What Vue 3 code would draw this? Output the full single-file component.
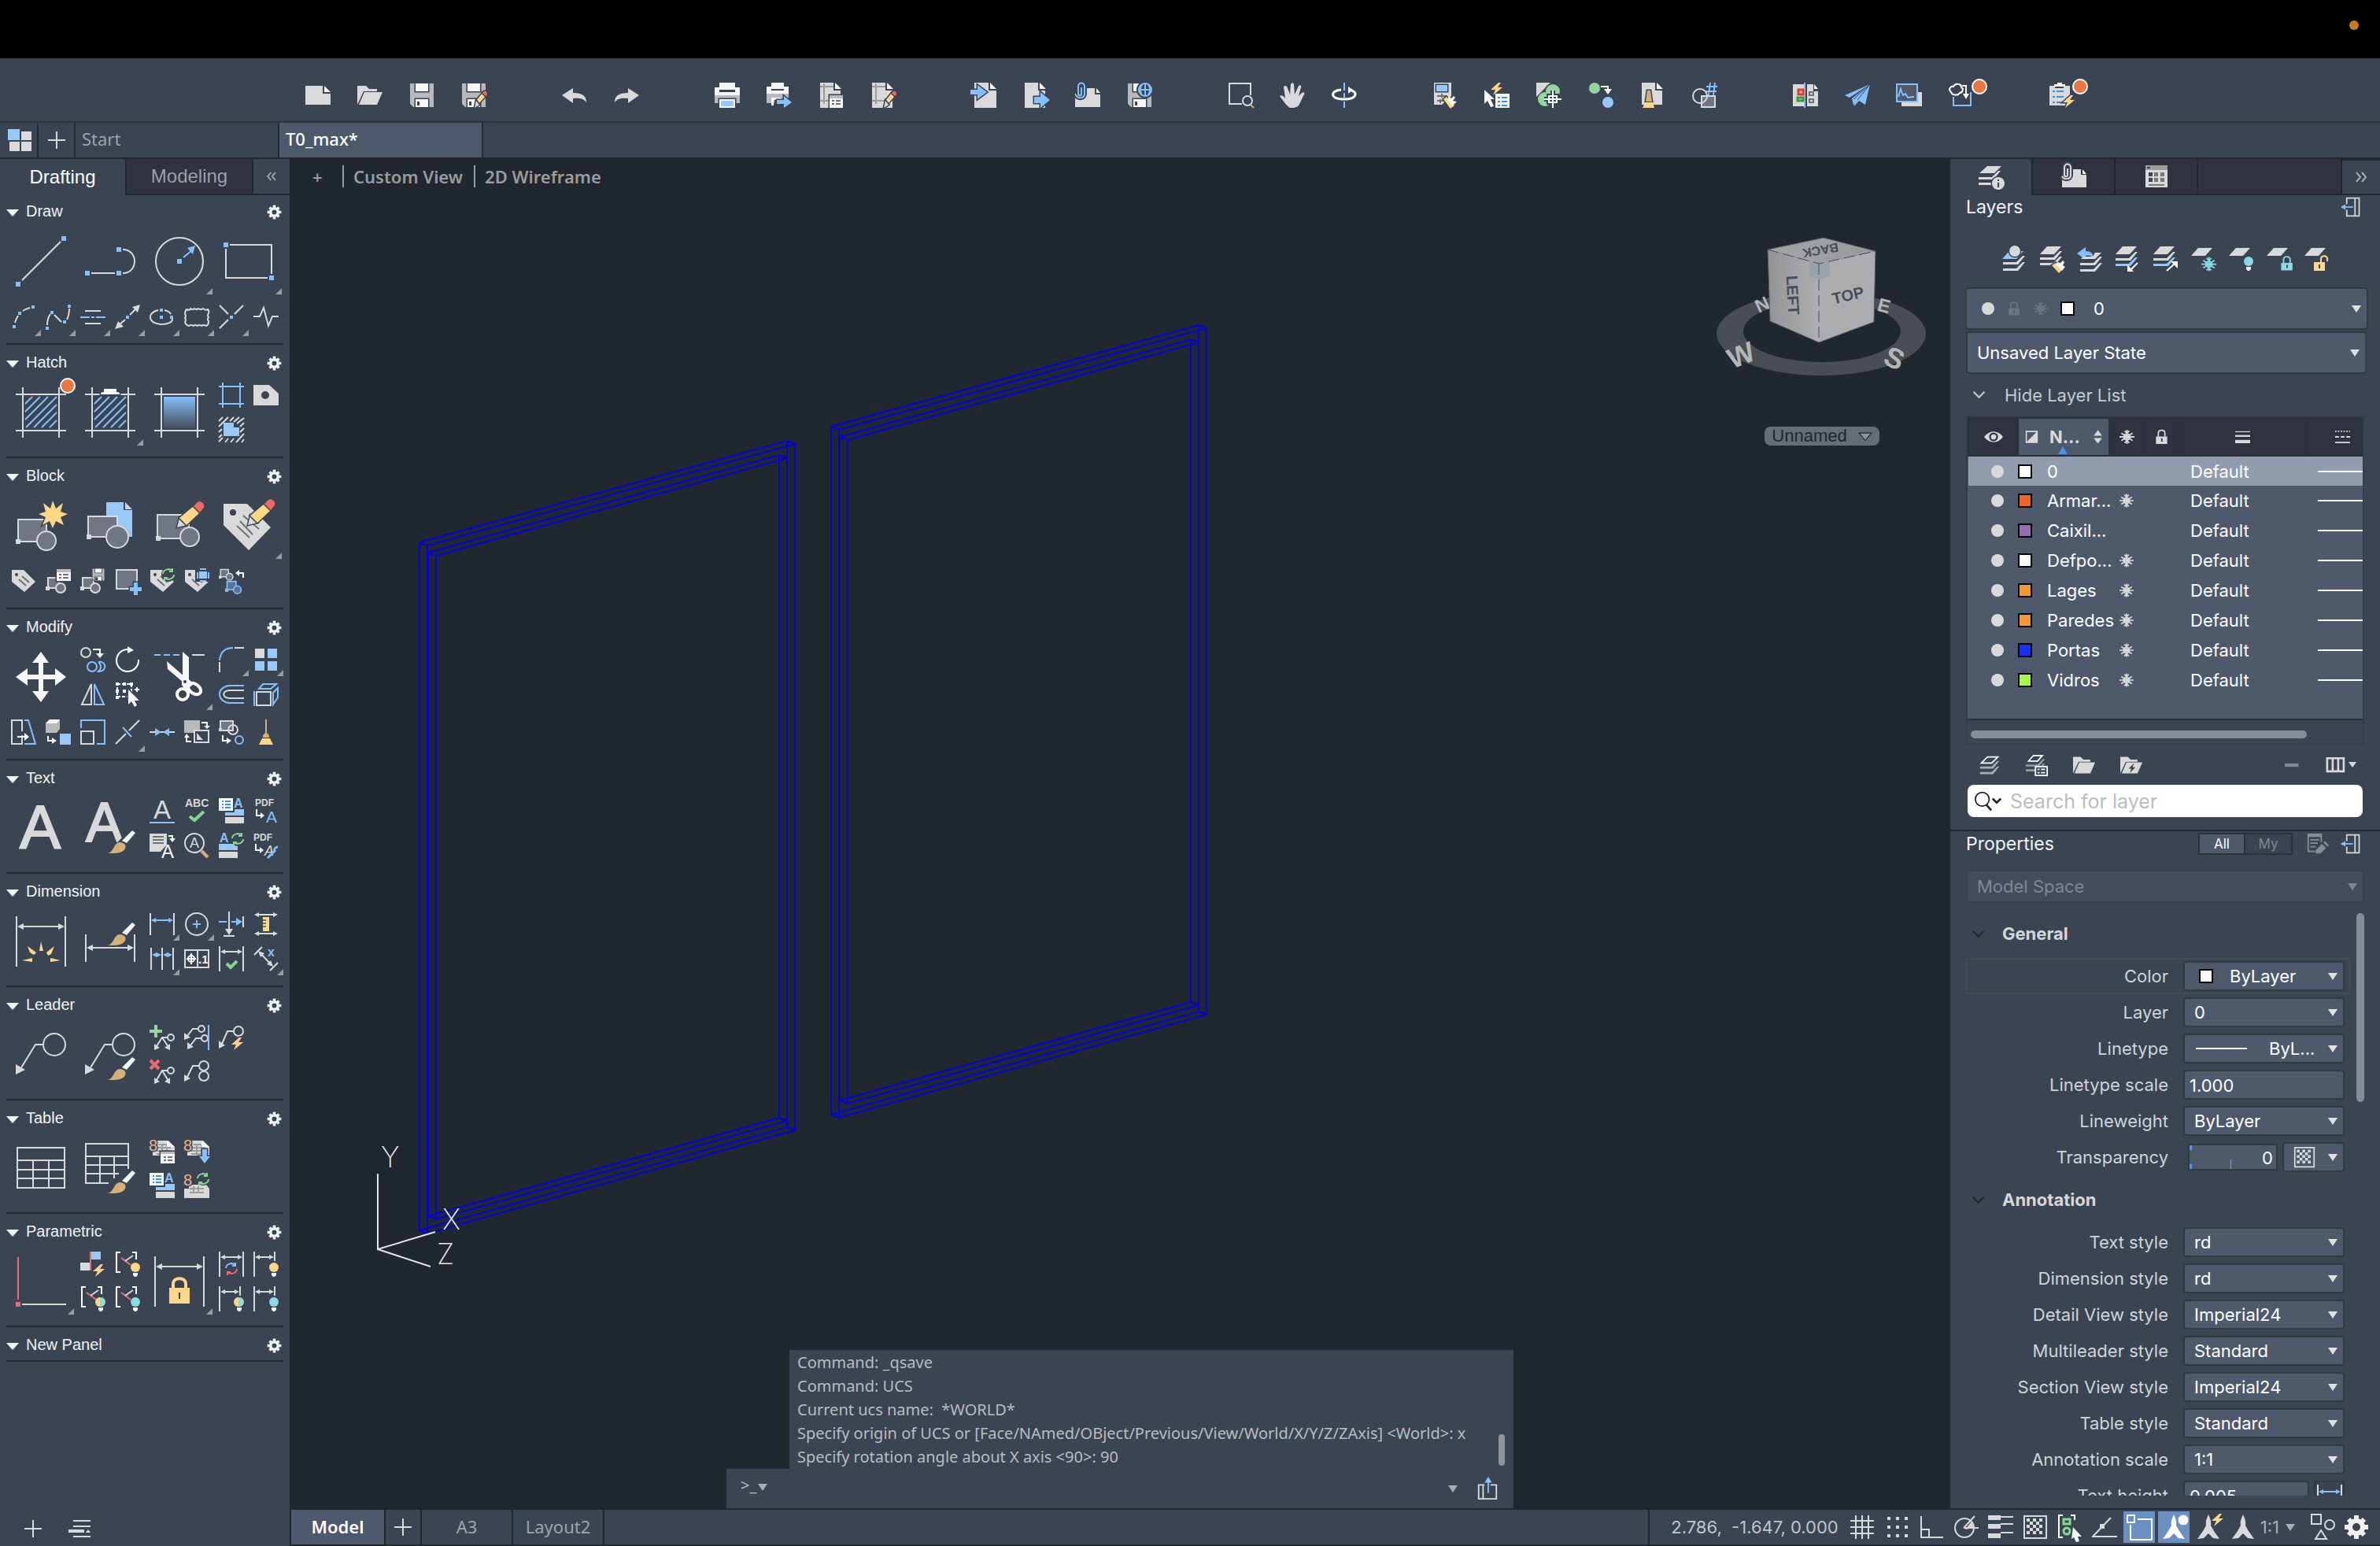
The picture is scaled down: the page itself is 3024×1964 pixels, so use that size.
<template>
  <div class="app">
    <header class="menubar">
      <span class="rec-dot"></span>
    </header>

    <nav class="toolbar" aria-label="Quick access">
      <div v-for="(group, i) in toolbar" :key="i" class="tool-group">
        <button v-for="name in group" :key="name" class="tool" :aria-label="name">
          <Icon :name="name" />
          <span v-if="badged.includes(name)" class="badge"></span>
        </button>
      </div>
    </nav>

    <nav class="doc-tabs" aria-label="Documents">
      <button class="doc-tab home" aria-label="Home"><Icon name="home" /></button>
      <button class="doc-tab add" aria-label="New tab"><Icon name="plus" /></button>
      <button class="doc-tab file">Start</button>
      <button class="doc-tab file active">T0_max*</button>
    </nav>

    <div class="main">
      <!-- tool palette -->
      <aside class="palette">
        <div class="palette-tabs">
          <button class="palette-tab active">Drafting</button>
          <button class="palette-tab">Modeling</button>
          <button class="collapse" aria-label="Collapse"><Icon name="left2" /></button>
        </div>
        <section v-for="panel in panels" :key="panel.title" class="panel">
          <div class="panel-head">
            <i class="tri"></i>
            <h2>{{ panel.title }}</h2>
            <button class="panel-gear" :aria-label="panel.title + ' settings'"><Icon name="gear" /></button>
          </div>
          <div v-if="panel.tools" class="panel-grid" :class="{ tall: panel.tall }">
            <button
              v-for="tool in panel.tools"
              :key="tool.icon"
              class="cell"
              :class="{ big: tool.big, fly: tool.fly, fifth: tool.fifth }"
              :aria-label="tool.icon"
            >
              <Icon :name="tool.icon" :size="tool.big ? 64 : 32" />
              <span v-if="tool.icon === 'hatch'" class="badge"></span>
            </button>
          </div>
        </section>
        <div class="palette-foot">
          <button aria-label="Add panel"><Icon name="plus" /></button>
          <button aria-label="Panel list"><Icon name="list" /></button>
        </div>
      </aside>

      <div class="work">
        <div class="stage">
          <main class="canvas">
            <svg class="drawing" aria-hidden="true">
              <g transform="translate(-368 -202)">
                <g v-for="shift in frames" :key="shift" :transform="shift" class="frame">
                  <path d="M533 689 1000 560V1432L533 1563z" />
                  <path d="M543 693 1010 564V1436L543 1567z" />
                  <path d="M544 702 990 578V1420L544 1545z" />
                  <path d="M554 706 1000 582V1424L554 1549z" />
                  <path d="M533 689l10 4M1000 560l10 4M1000 1432l10 4M533 1563l10 4M544 702l10 4M990 578l10 4M990 1420l10 4M544 1545l10 4" />
                </g>
                <path class="axis" d="M480 1491V1587L553 1565M480 1587 547 1609" />
                <text class="axis-name" x="484" y="1483">Y</text>
                <text class="axis-name" x="562" y="1562">X</text>
                <text class="axis-name" x="555" y="1606">Z</text>
              </g>
            </svg>

            <div class="view-labels">
              <button class="view-add">+</button>
              <button>Custom View</button>
              <button>2D Wireframe</button>
            </div>

            <div class="navigator">
              <svg width="290" height="200" viewBox="2170 290 290 200" role="img" aria-label="View cube">
                <defs>
                  <linearGradient id="cubeTop" x1="0" x2="1">
                    <stop offset="0" stop-color="#a3a4a6" /><stop offset="1" stop-color="#98999b" />
                  </linearGradient>
                  <linearGradient id="cubeLeft" x1="0" x2="1">
                    <stop offset="0" stop-color="#939496" /><stop offset="1" stop-color="#adaeb0" />
                  </linearGradient>
                </defs>
                <path
                  class="ring"
                  fill-rule="evenodd"
                  d="M2181 424a133 53 0 1 0 266 0a133 53 0 1 0-266 0zM2215 421a100 39 0 1 0 200 0a100 39 0 1 0-200 0z"
                />
                <g class="compass">
                  <text transform="translate(2239 387) rotate(155)">N</text>
                  <text transform="translate(2394 388) rotate(15)">E</text>
                  <text class="near" transform="translate(2212 451) rotate(-22)">W</text>
                  <text class="near" transform="translate(2407 455) rotate(24)">S</text>
                </g>
                <path fill="url(#cubeTop)" d="M2317 302 2383 319 2311 335 2246 317z" />
                <path fill="url(#cubeLeft)" d="M2246 317 2311 335V435L2249 408z" />
                <path fill="#acadaf" d="M2311 335 2383 319 2381 409 2311 435z" />
                <path fill="#9ca2aa" d="M2298 332l13-3 14 3v19l-14 4-13-4z" />
                <path class="edges" d="M2246 317 2311 335 2383 319M2311 335V435" />
                <path class="outline" d="M2317 302 2383 319 2381 409 2311 435 2249 408 2246 317z" />
                <g class="faces">
                  <text transform="translate(2348 375) rotate(-13)">TOP</text>
                  <text transform="translate(2278 375) rotate(87)">LEFT</text>
                  <text class="back" transform="translate(2313 318) rotate(170)">BACK</text>
                </g>
              </svg>
              <button class="ucs-name">Unnamed <Icon name="caretOutline" /></button>
            </div>

            <div class="command">
              <div class="history">
                <p v-for="(line, i) in history" :key="i">{{ line }}</p>
                <span class="thumb"></span>
              </div>
              <div class="prompt">
                <label for="cmd">&gt;_<i class="caret"></i></label>
                <input id="cmd" type="text" />
                <i class="caret"></i>
                <button aria-label="Detach"><Icon name="detach" /></button>
              </div>
            </div>
          </main>

          <aside class="inspector">
            <div class="side-tabs">
              <button class="side-tab active" aria-label="Layers"><Icon name="layersInfo" /></button>
              <button class="side-tab" aria-label="References"><Icon name="clipDoc" /></button>
              <button class="side-tab" aria-label="Content"><Icon name="calendar" /></button>
              <span class="side-fill"></span>
              <button class="side-more" aria-label="Collapse"><Icon name="right2" /></button>
            </div>

            <section class="layers">
              <div class="side-title">
                <h2>Layers</h2>
                <button aria-label="Undock"><Icon name="dock" /></button>
              </div>
              <div class="layer-tools">
                <button v-for="name in layerTools" :key="name" :aria-label="name"><Icon :name="name" /></button>
              </div>
              <div class="select current">
                <span class="state">
                  <i class="dot"></i><Icon name="lock" class="dim" /><Icon name="snow" class="dim" />
                  <i class="swatch"></i>
                </span>
                <select aria-label="Current layer"><option>0</option></select>
              </div>
              <div class="select layer-state">
                <select aria-label="Layer state"><option>Unsaved Layer State</option></select>
              </div>
              <button class="toggle-list"><Icon name="chevron" /> Hide Layer List</button>

              <div class="table-box">
                <div class="table-scroll">
                  <table>
                    <colgroup>
                      <col class="c-eye" /><col class="c-name" /><col class="c-flag" /><col class="c-flag" />
                      <col class="c-weight" /><col />
                    </colgroup>
                    <thead>
                      <tr>
                        <th><Icon name="eye" /></th>
                        <th class="sorted">
                          <div><Icon name="contrast" /><span>N...</span><Icon name="sort" /></div>
                        </th>
                        <th><Icon name="snow" /></th>
                        <th><Icon name="lock" /></th>
                        <th><Icon name="weight" /></th>
                        <th class="last"><Icon name="dashes" /></th>
                      </tr>
                    </thead>
                    <tbody>
                      <tr v-for="layer in layers" :key="layer.name" :class="{ picked: layer.picked }">
                        <td class="eye"><i class="dot"></i></td>
                        <td>
                          <div class="layer-name">
                            <i class="swatch" :style="{ background: layer.color }"></i>{{ layer.name }}
                          </div>
                        </td>
                        <td class="mid"><Icon v-if="layer.frozen" name="snow" /></td>
                        <td></td>
                        <td class="weight">Default</td>
                        <td class="ltype"><i></i></td>
                      </tr>
                    </tbody>
                  </table>
                </div>
                <span class="thumb"></span>
              </div>

              <div class="list-tools">
                <button aria-label="New layer"><Icon name="newLayer" /></button>
                <button aria-label="Layer states"><Icon name="layerStates" /></button>
                <button aria-label="New group"><Icon name="open" /></button>
                <button aria-label="Dynamic group"><Icon name="openBolt" /></button>
                <span class="grow"></span>
                <button aria-label="Delete"><Icon name="minus" /></button>
                <button aria-label="Columns"><Icon name="columns" /></button>
              </div>
              <label class="search">
                <Icon name="search" />
                <input type="text" placeholder="Search for layer" aria-label="Search for layer" />
              </label>
            </section>

            <section class="props">
              <div class="side-title">
                <h2>Properties</h2>
                <div class="switch">
                  <button class="on">All</button>
                  <button>My</button>
                </div>
                <button aria-label="Edit"><Icon name="edit" /></button>
                <button aria-label="Undock"><Icon name="dock" /></button>
              </div>
              <div class="select space">
                <select aria-label="Selection" disabled><option>Model Space</option></select>
              </div>

              <div class="prop-scroll">
                <div class="prop-body">
                  <h3><Icon name="chevron" /> General</h3>
                  <div class="row focus">
                    <label for="p-color">Color</label>
                    <div class="select"><i class="swatch"></i><select id="p-color"><option>ByLayer</option></select></div>
                  </div>
                  <div class="row">
                    <label for="p-layer">Layer</label>
                    <div class="select"><select id="p-layer"><option>0</option></select></div>
                  </div>
                  <div class="row">
                    <label for="p-ltype">Linetype</label>
                    <div class="select"><i class="sample"></i><select id="p-ltype"><option>ByL...</option></select></div>
                  </div>
                  <div class="row">
                    <label for="p-scale">Linetype scale</label>
                    <input id="p-scale" class="field" type="text" value="1.000" />
                  </div>
                  <div class="row">
                    <label for="p-weight">Lineweight</label>
                    <div class="select"><select id="p-weight"><option>ByLayer</option></select></div>
                  </div>
                  <div class="row">
                    <label for="p-trans">Transparency</label>
                    <div class="pair">
                      <input id="p-trans" class="field amount" type="text" value="0" />
                      <button class="select mini" aria-label="Transparency method"><Icon name="checker" /></button>
                    </div>
                  </div>
                  <h3><Icon name="chevron" /> Annotation</h3>
                  <div v-for="(item, i) in annotation" :key="item[0]" class="row">
                    <label :for="'a-' + i">{{ item[0] }}</label>
                    <div class="select"><select :id="'a-' + i"><option>{{ item[1] }}</option></select></div>
                  </div>
                  <div class="row">
                    <label for="a-height">Text height</label>
                    <div class="pair">
                      <input id="a-height" class="field height" type="text" value="0.005" />
                      <button class="measure" aria-label="Measure"><Icon name="dimLinear" /></button>
                    </div>
                  </div>
                </div>
                <span class="thumb"></span>
              </div>
            </section>
          </aside>
        </div>

        <footer class="status">
          <button class="sheet active">Model</button>
          <button class="sheet plus" aria-label="New layout"><Icon name="plus" /></button>
          <button class="sheet">A3</button>
          <button class="sheet">Layout2</button>
          <span class="grow"></span>
          <span class="coords">2.786,&nbsp; -1.647, 0.000</span>
          <button
            v-for="name in statusTools"
            :key="name"
            class="mode"
            :class="{ on: name === 'osnap' || name === 'annoVis' }"
            :aria-label="name"
          >
            <Icon :name="name" />
          </button>
          <button class="scale">1:1 <i class="caret"></i></button>
          <button class="mode" aria-label="isolate"><Icon name="isolate" /></button>
          <button class="mode" aria-label="settings"><Icon name="gear" /></button>
        </footer>
      </div>
    </div>
  </div>
</template>

<script setup>
import { h } from "vue";

// ---- small pieces shared by several icons ----
const sq = (x, y, s = 5) => `<rect class="fB" x="${x - s / 2}" y="${y - s / 2}" width="${s}" height="${s}"/>`;
const brush = `<path class="fw" d="M47 48 60 35l4 3-11 13z"/><path class="ft" d="M28 64c9-1 8-13 16-14 6 0 9 4 7 8-4 7-14 6-23 6z"/>`;
const lightning = (x, y) => `<path class="fy" transform="translate(${x} ${y})" d="M10 0 0 9h6l-3 7L15 6H9l4-6z"/>`;
const bulb = (color, x = 20, y = 12) =>
  `<g transform="translate(${x} ${y})"><circle cx="6" cy="6" r="6" fill="${color}"/><path class="fw" d="M3 13h6v3l-2 2H5l-2-2z"/></g>`;
const halfBulb = (x, y) =>
  `${bulb("#8adbe6", x, y)}<path class="fy" transform="translate(${x} ${y})" d="M5 0a6 6 0 0 0 0 12z"/>`;
const tag = `<path class="fg" d="M1 2h15l15 15-14 13L1 17z"/><circle class="fd" cx="7" cy="8" r="2"/><path class="sd" d="M14 10l9 8M10 14l9 8"/>`;
const block = (x, y, blue = "") =>
  `<g transform="translate(${x} ${y})" class="${blue}"><path class="o fk" d="M3 2h14v13H3z"/><circle class="o fk" cx="19" cy="15" r="6"/><rect class="f" x="0" y="13" width="5" height="5"/></g>`;
const refresh = (x, y, a = "#85d68f", b = a) =>
  `<g transform="translate(${x} ${y})" fill="none" stroke-width="2"><path stroke="${a}" d="M1 7a7 6 0 0 1 12-4M13 0v4H9"/><path stroke="${b}" d="M15 8a7 6 0 0 1-12 4M3 16v-4h4"/></g>`;
const dimH = (y, x1 = 1, x2 = 31, c = "s", f = "fg") =>
  `<path class="${c}" d="M${x1 + 3} ${y}H${x2 - 3}"/><path class="${f}" d="M${x1 + 1} ${y}l6-3v6zM${x2 - 1} ${y}l-6-3v6z"/>`;
const hatchBox = `<path class="s" d="M9 0v64M55 0v64M0 9h64M0 55h64"/>`;
const hatchLines = `<path class="b" d="M12 21 21 12M12 31 31 12M12 41 41 12M13 51 52 12M23 51 52 22M33 51 52 32M43 51l9-9"/>`;
const sheet = `<path class="fg" d="M2 0h17v10h9v22H2z"/><path class="fw" d="M21 0v8h8z"/>`;
const grid = `<path d="M7 1v26M2 5h17M2 23h24" stroke="#9c9c9c" stroke-width="2"/>`;
const floppy = `<path class="fG" d="M1 1h30v30H5l-4-4z"/><path class="fw hd" d="M8 1h16v10H8z"/><path class="fw hd" d="M8 21h16v10H8z"/><path class="fd" d="M10 24h3v5h-3z"/>`;
const pencil = `<g class="hd"><path class="fy" d="M19 23 27 13l4 4-9 10z"/><path class="fr" d="m27 13 2-2 3 0 1 4-2 2z"/><path class="fg" d="m19 23-2 9 6-4z"/></g>`;
const bigPencil = `<g class="hd"><path class="fg" d="m29 34 3-12 9 9z"/><path class="fy" d="M32 22 50 7l8 8-17 16z"/><path class="fr" d="m50 7 5-5c5-3 11 4 7 8l-4 5z"/></g>`;
const leader = (x, y, s = 1) =>
  `<g transform="translate(${x} ${y}) scale(${s})"><circle class="s" cx="49" cy="16" r="14"/><path class="s" d="M34 16H25L6 47"/><path class="fg" d="M0 41v13l12-6z"/></g>`;
const smallLeader = (x, y) =>
  `<g transform="translate(${x} ${y})"><circle class="s" cx="22" cy="5" r="4"/><path class="s" d="M18 5h-7l-7 9"/><path class="fg" d="M0 10v9l8-3z"/></g>`;
const layer = (y, c = "fg") => `<path class="${c}" d="M9 ${y}h18l-9 10H0z"/>`;
const layerEdge = (y, c = "fg", x = 0) => `<path class="${c}" transform="translate(${x} ${y})" d="M0 8h17l8-8h3l-9 11H0l0-1z"/>`;
const snowFlake = `<path d="M16 1v30M4 8l24 16M4 24 28 8M0 16h32M11 3l5 5 5-5M11 29l5-5 5 5M16 9l6 3v8l-6 3-6-3v-8z" fill="none" stroke="currentColor" stroke-width="3"/>`;
const padlock = `<path fill="currentColor" fill-rule="evenodd" d="M4 15h24v16H4zM15 19v7h3v-7z"/><path d="M9 15V8c0-8 14-8 14 0v7" fill="none" stroke="currentColor" stroke-width="3"/>`;
const stack = `<path class="fg" d="M11 2h18l-9 9H1z"/>${layerEdge(8)}${layerEdge(15)}`;
const sheetSet = `<text x="-1" y="16" class="t sset" font-size="20">8</text>`;
const bracket = `<path class="w" d="M7 1H2v25h5M22 1h5v9"/><path d="M8 8l12 9" stroke="#e27070" stroke-width="2"/><path class="s" d="m13 12 10-7"/>`;
const tableDoc = `<path class="fg" d="M10 3h14l8 8v11H4v-6h6z"/><path d="M11 8h11v12H9M9 12h18M9 16h18M16 8v12" fill="none" stroke="#9c9c9c" stroke-width="2"/><path class="fw" d="M22 3v8h10z"/>`;
const anno = `<path class="fg" d="M16 0c2 5 4 8 3 14l4 7 7 10-8-1-6-6-6 6-8 1 7-10 4-7c-1-6 1-9 3-14z"/>`;
const box = `<path class="fw" d="M0 0h18v16H0z"/><path d="M4 4h2M8 4h7M4 8h2M8 8h7M4 12h2M8 12h7" stroke="#3f8fe0" stroke-width="2"/>`;
const clipPath = "M8 6v8c0 3-4 3-4 0V5c0-6 8-6 8 0v9c0 7-9 6-11 2";

const icons = {
  // title toolbar
  new: `<path class="fg" d="M0 4h22v10h10v14H0z"/><path class="fw" d="M24 4v8h8z"/>`,
  open: `<path class="fg" d="M0 28V4h11l4 4h10v3H8z"/><path class="fg" d="M9 12h23l-7 16H2z"/>`,
  save: floppy,
  saveAs: floppy + pencil,
  undo: `<path class="fg" d="M0 16 14 7v6c12 0 17 4 17 12-3-5-9-6-17-5v6z"/>`,
  redo: `<path class="fg" d="M32 16 18 7v6C6 13 1 17 1 25c3-5 9-6 17-5v6z"/>`,
  print: `<path class="fw" d="M0 6h6v6h20V6h6v10H0z"/><path class="fw" d="M6 0h20v9H6z"/><path class="fG" d="M0 16h32v10H0z"/><path class="fw hd" d="M6 21h20v11H6z"/><path class="fb" d="M8 23h16v7H8z"/>`,
  publish: `<path class="fw" d="M0 5h6v5h16V5h6v9H0z"/><path class="fw" d="M6 0h16v8H6z"/><path class="fG" d="M0 14h28v8H10v4H0z"/><path class="fw" d="M6 19h12v3H9v7H6z"/><path class="fB hd" d="M13 22h9v-5l10 8-10 7v-5h-9z"/>`,
  pageSetup: `${sheet}${grid}<path class="fw hd" d="M14 16h17v16H14z"/><path class="fG" d="M14 16h17v4H14z"/><path class="sd" d="M17 23h3M22 23h6M17 27h3M22 27h6"/>`,
  plotStyle: sheet + grid + pencil,
  import: `<path class="fg" d="M4 0h18v10h10v22H4z"/><path class="fw" d="M24 0v8h8z"/><path class="fB hd" d="M-1 9h9V3l12 9-12 9v-6h-9z"/>`,
  export: `${sheet}<path class="fB hd" d="M14 18h8v-6l12 10-12 10v-6h-8z"/>`,
  attach: `<path class="fg" d="M0 14h12V7h13v8h7v16H0z"/><path class="fw" d="M27 7v6h5z"/><path class="cut" d="${clipPath}"/><path class="b" d="${clipPath}"/>`,
  webPublish: `${floppy}<circle class="fd" cx="23" cy="9" r="11"/><circle class="b" cx="23" cy="9" r="8"/><path class="b" d="M15 9h16M23 1v16M19 2c-3 5-3 9 0 14M27 2c3 5 3 9 0 14"/>`,
  zoom: `<path class="s" d="M18 27H2V1h27v15"/><circle class="s" cx="25" cy="23" r="6"/><path d="m29 28 4 4" stroke="#d5ae7a" stroke-width="2"/>`,
  pan: `<path class="fg" d="M12 31C7 28 4 22 0 17c2-2 5 0 7 3L5 5c2-2 4-1 5 2l3 8 1-13c2-3 4-2 4 1l1 12 5-11c2-2 4 0 3 2l-3 11 4-4c3-2 4 0 3 2-3 5-5 12-8 15-3 2-9 3-12 1z"/>`,
  orbit: `<path class="b" d="M16 0v10M16 13v6M16 24v8"/><path d="M12 9C-3 10-2 22 16 21c17 0 18-10 6-12" class="w w3"/><path class="fw" d="M21 5v9l6-5z"/>`,
  match: `<path class="fg" d="M2 0h22v17L12 28H2z"/><path class="fb hd" d="M5 3h14v8H5z"/><path class="sd" d="M6 17h12M6 23h8M12 14v5M10 21v5"/><path class="fy hd" d="m14 21 4-3 10 11-5 4z"/><path class="fw" d="m21 17 3 3 3-3 2 2-3 4 5 1-5 5-7-7z"/>`,
  quick: `${lightning(8, 0)}<path class="fw" d="M0 9l13 12H8l4 9-4 1-4-8-4 4z"/><path class="fw" d="M14 14h18v18H14z"/><path d="M17 19h3M22 19h7M17 24h3M22 24h7M17 29h3M22 29h7" stroke="#3f8fe0" stroke-width="2"/>`,
  count: `<path class="fg" d="M0 0h18L0 18z"/><circle class="fn hd" cx="21" cy="11" r="9"/><circle class="fn" cx="11" cy="21" r="9"/><path class="cut" d="M10 21h22M21 10v22M16 17h10v8H16z"/><path class="w" d="M10 21h22M21 10v22M16 17h10v8H16z"/>`,
  replace: `<circle class="fn" cx="8" cy="7" r="7"/><circle class="fb" cx="25" cy="25" r="7"/><path class="w" d="M16 5h9v5"/><path class="fw" d="M20 8h10l-5 7z"/>`,
  clean: `<path class="fg" d="M2 0h17v10h9v18H2z"/><path class="fw" d="M21 0v8h8z"/><path class="ft hd" d="M9 10h4l2 14H7z"/><path class="fy" d="M6 25h10l2 7H3z"/>`,
  countNum: `<path class="o fk" d="M12 17h17v14H12z"/><circle class="s" cx="10" cy="17" r="9"/><path class="b" d="M18 5h14M17 11h14M23 0l-2 16M29 0l-2 16"/>`,
  compare: `<path class="fg" d="M0 2h14v28H0z"/><path class="fg" d="M18 2h8v9h6v19H18z"/><path class="fw" d="M27 2v6h5z"/><path class="b" d="M15 0v32"/><path d="M7 9h6v6H7z" fill="none" stroke="#e23a2c" stroke-width="3"/><path d="M6 19h7v4H6z" fill="none" stroke="#3a9c3a" stroke-width="3"/><path class="sd" d="M21 12h5v4h-5zM21 21h5v4h-5z"/>`,
  share: `<path class="fB" d="M32 2 0 16l6 3zM32 2 9 20l2 9z"/><path class="fB" d="m32 2-6 26-8-5-6 7 2-9z"/><path d="M32 2 11 21M32 2 16 22" stroke="#3b4453"/>`,
  trace: `<path class="fg" d="M6 12h26v18H6z"/><path fill="#4f596b" stroke="#84c0fb" stroke-width="2" d="M0 2h26v22H0z"/><path class="b" stroke-width="1" d="M2 18l3-10 3 8 3-2 3 5 8-1"/>`,
  cloud: `<path class="b" d="M6 18v11h22V12"/><path class="w" d="M3 12c-4-3-1-8 3-7 2-5 10-4 10 1 4 2 1 7-2 7-2 4-10 3-11-1z"/><path class="w" d="M17 4h5v13"/><path class="fw" d="M18 14h8l-4 7z"/>`,
  clipBolt: `<path class="fg" d="M0 4h7v3h11V4h8v25H0z"/><path class="fw" d="M6 2h4V0h6v2h4v3H6z"/><path d="M4 11h3M9 11h9M4 18h3M9 18h9M4 25h3M9 25h7" stroke="#3f8fe0" stroke-width="2"/><g class="hd">${lightning(17, 16)}</g>`,
  home: `<path class="fb" d="M1 2h15v14H1z"/><path class="fg" d="M18 5h13v11H18zM3 18h13v12H3zM18 18h13v12H18z"/>`,
  plus: `<path class="s" d="M16 5v22M5 16h22"/>`,
  left2: `<path class="s" d="m15 10-5 6 5 6M22 10l-5 6 5 6"/>`,
  right2: `<path class="s" d="m10 10 5 6-5 6M17 10l5 6-5 6"/>`,
  list: `<path class="s" d="M8 6h22M8 13h22M8 26h22"/><path d="M2 19h20" stroke="#d9d9d9" stroke-width="4"/><path class="fg" d="m27 17 3 4h-6z"/>`,
  gear: `<circle cx="16" cy="16" r="8" fill="none" stroke="#f0f0f0" stroke-width="6"/><path d="M16 1v6M16 25v6M1 16h6M25 16h6M6 6l4 4M22 22l4 4M6 26l4-4M22 10l4-4" stroke="#f0f0f0" stroke-width="6"/>`,

  // draw
  line: `<path class="s" d="M8 56 57 7"/>${sq(3, 61, 6)}${sq(61, 3, 6)}`,
  polyline: `<path class="s" d="M8 47h30M48 47c20 0 20-30 0-30"/>${sq(3, 47, 6)}${sq(43, 47, 6)}${sq(43, 17, 6)}`,
  circle: `<circle class="s" cx="32" cy="32" r="30"/><path class="b" d="m37 27 11-9"/><path class="fB" d="m52 12-3 11-7-8z"/>${sq(32, 32, 6)}`,
  rect: `<path class="s" d="M3 16v37h53M8 11h53v37"/>${sq(3, 11, 6)}${sq(61, 53, 6)}`,
  arc: `<path class="s" d="M5 24c1-4 2-6 4-9M15 9c3-2 5-3 9-4"/>${sq(4, 29, 4)}${sq(11, 12, 4)}${sq(28, 4, 4)}`,
  spline: `<path class="s" d="M2 27c0-6 1-10 4-14M11 14l9 9M27 20c2-4 3-8 3-14"/>${sq(2, 31, 4)}${sq(8, 11, 4)}${sq(24, 23, 4)}${sq(30, 3, 4)}`,
  xline: `<path class="s" d="M6 9h20M6 25h20"/><path class="b" d="M0 17h12M14 17h4M20 17h12"/>`,
  ray: `<path class="s" d="M4 28 13 20M19 14l9-9"/><path class="fg" d="M32 1 22 4l7 7zM0 32l4-10 7 7z"/>${sq(16, 17, 4)}`,
  ellipse: `<path class="s" d="M11 8C-3 11-3 24 14 26c13 0 17-5 14-8M19 8c4 1 7 3 8 5"/>${sq(15, 8, 4)}${sq(15, 17, 4)}${sq(28, 17, 4)}`,
  cloudRect: `<path class="s" d="M3 7q4 2 5-1 3 2 5 0 3 2 5 0 3 2 6 0 4 3 6 1 2 2 1 5-2 3 0 5-2 3 0 5 0 5-3 6-4-2-6 0-3-2-5 0-3-2-5 0-3-2-6 0-4-1-5-5 2-3 0-5 2-3 0-5 0-4 2-6z"/>`,
  point: `<path class="s" d="m1 2 11 11M31 2 20 13M1 31l11-11"/>${sq(16, 17, 4)}`,
  breakline: `<path class="s" d="M0 16h8l5-11 6 23 5-12h8"/>`,
  // hatch
  hatch: hatchBox + hatchLines,
  hatchEdit: `${hatchBox}${hatchLines}<path class="fw hd" d="M20 9c0-3 2-3 4-3V2h16v4c2 0 4 0 4 3z"/>`,
  gradient: `<defs><linearGradient id="gr" x2="0" y2="1"><stop stop-color="#84c0fb"/><stop offset="1" stop-color="#454d5c"/></linearGradient></defs>${hatchBox}<path fill="url(#gr)" d="M12 12h40v40H12z"/>`,
  boundary: `<path class="b" d="M5 0v32M27 0v32M0 5h32M0 27h32"/>`,
  wipeout: `<path class="fg" d="M0 3h20l12 11v15H0z"/><circle class="fd" cx="15" cy="16" r="5"/>`,
  superhatch: `<path class="s" d="M0 5 5 0M0 12 12 0M0 19l4-4M14 5l5-5M0 26l4-4M19 6l7-6M0 31l5-5M23 8l9-7M8 32l4-5M27 12l5-5M15 32l4-5M27 19l5-5M22 32l10-11M29 32l3-4"/><path class="fb" d="M6 7h13v6h7v11H6z"/>`,
  // block
  insertBlock: `<path class="o fk" d="M3 24h36v28H3z"/><circle class="o fk" cx="39" cy="51" r="12"/><path class="fg" d="M0 49h6v6H0z"/><path class="fy hd" d="m47 0 4 10 9-7-3 11 9 3-9 4 4 10-10-5-4 9-4-9-9 5 4-10-9-4 9-3-3-11 9 7z"/>`,
  createBlock: `<path class="fb" d="M27 2h22v10h11v34H27z"/><path class="fw" d="M51 2v9h9z" fill-opacity=".8"/><path class="o fk" d="M4 20h37v26H4z"/><circle class="o fk" cx="41" cy="46" r="14"/><path class="fg" d="M2 43h6v6H2z"/>`,
  editBlock: `<path class="o fk" d="M4 18h40v30H4z"/><circle class="o fk" cx="45" cy="46" r="12"/><path class="fg" d="M2 45h6v6H2z"/>${bigPencil}`,
  editAttr: `<path class="fg" d="M0 4h30l30 30-28 29L0 31z"/><circle class="fd" cx="12" cy="15" r="4"/><path class="sd" d="M25 19l20 17M21 26l16 17M17 32l16 15"/><g transform="translate(2 -3)">${bigPencil}</g>`,
  attrDef: tag,
  blockList: `${block(0, 10)}<path class="fw hd" d="M14 1h18v15H14z"/><path class="fG" d="M14 1h18v4H14z"/><path class="sd" d="M17 8h3M22 8h7M17 12h3M22 12h7"/>`,
  blockSave: `${block(0, 10)}<g transform="translate(15 0) scale(.5)" class="hd">${floppy}</g>`,
  blockBase: `<path class="o fk" d="M2 2h26v24H2z"/><path class="fB hd" d="M24 18h5v6h5v5h-5v5h-5v-5h-5v-5h5z"/>`,
  attrSync: `${tag}<circle class="fd" cx="24" cy="8" r="9"/>${refresh(16, 0)}`,
  attrManage: `${tag}<path class="fd" d="M14 0h20v17H14z"/><path class="fb" d="M19 4h10v9H19z"/><path class="b" d="M20 1h8M20 16h8M17 5v8M31 5v8"/>`,
  blockReplace: `<g transform="scale(.72)">${block(0, 0)}</g><g transform="translate(8 15) scale(.82)">${block(0, 0, "blue")}</g><path class="w" d="M31 12V6h-6"/><path class="fw" d="m21 6 5-4v8z"/>`,
  // modify
  move: `<path class="fw" d="M29 14h-8L32 0l10 14h-7v15h15v-8l14 11-14 11v-8H35v15h7L32 64 21 50h8V35H15v8L0 32l15-11v8h14z"/>`,
  copy: `<circle class="s" cx="7" cy="7" r="6"/><circle class="b" cx="15" cy="25" r="6"/><path class="b" d="M23 19c11-2 11 13 0 12 4-3 4-9 0-12"/><path class="w" d="M16 3h9v6"/><path class="fw" d="M20 8h10l-5 6z"/>`,
  rotate: `<path class="w" d="M16 3a14 14 0 1 0 14 13"/><path class="fw" d="M16-1v9l8-4z"/>`,
  trim: `<path class="b" d="M0 4h32" stroke-dasharray="8 4"/><path class="s" d="M48 4h16"/><path class="fw" d="M36 0l8 7v30l-8-5zM16 12l24 21-3 6L17 22z"/><circle class="w w4" cx="36" cy="54" r="7"/><ellipse class="w w4" cx="51" cy="47" rx="9" ry="6" transform="rotate(35 51 47)"/><path class="fw" d="m35 34 8 0 7 7-6 5-5 2-4-6z"/><circle cx="39" cy="38" r="2" fill="#3b4453"/>`,
  fillet: `<path class="b" d="M1 17C2 7 7 1 18 1"/><path class="s" d="M20 1h12M1 19v13"/>`,
  array: `<path class="fg" d="M2 2h12v12H2z"/><path class="fb" d="M18 2h12v12H18zM2 18h12v12H2zM18 18h12v12H18z"/>`,
  mirror: `<path class="s" d="M14 3v26H2z"/><path class="b" d="M18 3v26h12z"/>`,
  stretch: `<path class="w" d="M3 3h18v16H3z" stroke-dasharray="4 2"/><path class="fw" d="M1 1h4v4H1zM10 1h4v4h-4zM19 1h4v4h-4zM1 10h4v4H1zM10 10h4v4h-4zM1 18h4v4H1z"/><path class="fw hd" d="m17 10 14 14h-6l3 6-3 2-4-7-4 4z"/><path class="w" d="M25 10h6M28 7v6"/>`,
  offset: `<path class="b" d="M32 5H13C-3 7-3 25 13 27h19"/><path class="s" d="M32 11H13C4 12 4 20 13 21h19"/>`,
  explode: `<path class="s" d="M4 13h18v17H4z"/><path class="b" d="M12 3h17l-7 6H7zM31 8v12l-6 9V14zM1 12v19"/>`,
  extend: `<path class="s" d="M14 20v11H1V1h13v14"/><path class="b" d="M17 1h5l9 30H17"/><path class="w" d="M8 22h12"/><path class="fw" d="m17 17 6 5-6 5z"/>`,
  extract: `<path class="fG" d="M0 5 5 0h13v12l-4 5H0z"/><path class="fw" d="M0 5 5 0h13l-4 5z"/><path class="fb" d="M18 18h14v14H18z"/><path class="w" d="M3 21v6h6"/><path class="fw" d="m8 23 6 4-6 4z"/>`,
  scale: `<path class="b" d="M1 11V1h30v30H21"/><path class="s" d="M1 15h16v16H1z"/>`,
  break: `<path class="s" d="m1 31 13-13M18 14 31 1"/><path class="b" d="m10 10 11 12"/>`,
  join: `<path class="s" d="M0 16h32"/><path class="fB" d="m15 16-8-5v10zM17 16l8-5v10z"/>`,
  order: `<path class="fG" d="M0 1h20v16H0z"/><path class="s hdf" d="M13 14h18v15H13z"/><path class="fg" d="M16 17v9h8z"/><path class="w" d="M22 4h7v5M9 28H3v-6"/><path class="fw" d="M25 8h8l-4 4zM0 23h7l-4-5z"/>`,
  copyNest: `<path class="o fk" d="M2 2h16v12H2z"/><circle class="s" cx="18" cy="13" r="6"/><path class="fg" d="M0 11h4v4H0z"/><circle class="b" cx="26" cy="26" r="5"/><path class="w" d="M5 20v7h6"/><path class="fw" d="m10 23 6 4-6 4z"/>`,
  purge: `<path class="ft" d="M15 0h2v17l3 3v3h-8v-3l3-3z"/><path class="fy" d="M11 24h10l4 8H7z"/>`,
  // text
  mtext: `<text class="t fg" x="5" y="58" font-size="78" stroke="#d9d9d9" stroke-width="2">A</text>`,
  textStyle: `<text class="t fg" x="1" y="49" font-size="70" stroke="#d9d9d9" stroke-width="2">A</text><path class="fd" d="M45 46 64 30v34H28z"/>${brush}`,
  text: `<text class="t fg" x="5" y="26" font-size="33">A</text><path class="b" d="M0 31h32"/>`,
  spell: `<text class="t fg" x="1" y="11" font-size="14" font-weight="700">ABC</text><path d="m7 23 6 5 12-11" fill="none" stroke="#85d68f" stroke-width="4"/>`,
  textList: `${box}<text class="t fB" x="19" y="12" font-size="16" font-weight="700">A</text><path class="fb" d="M20 14h12v8H8v-4h12z"/><path class="fg" d="M8 24h24v8H8z"/>`,
  pdfText: `<text class="t fg" x="2" y="10" font-size="12" font-weight="700">PDF</text><path class="w" d="M4 14v8h6"/><path class="fw" d="m9 18 5 4-5 4z"/><text class="t fB" x="16" y="31" font-size="21">A</text>`,
  textToM: `<path class="fg" d="M0 1h22v14L14 24H0z"/><path class="sd" d="M4 5h14M4 9h14M4 13h14"/><text class="t fw" x="15" y="32" font-size="24">A</text><path class="w" d="M24 4h5v4"/><path class="fw" d="M25 7h8l-4 5z"/>`,
  findText: `<circle class="s" cx="13" cy="13" r="12"/><text class="t fg" x="7" y="19" font-size="18">A</text><path d="m22 23 8 8" stroke="#d5ae7a" stroke-width="4"/>`,
  textUpd: `<text class="t fB" x="1" y="12" font-size="16" font-weight="700">A</text><path class="fb" d="M0 14h24v8H0z"/><path class="fg" d="M0 24h24v8H0z"/><circle class="fd" cx="24" cy="8" r="9"/>${refresh(16, 0)}`,
  pdfSet: `<text class="t fg" x="0" y="10" font-size="12" font-weight="700">PDF</text><path class="w" d="M3 14v8h6"/><path class="fw" d="m8 18 5 4-5 4z"/><text class="t fg" x="14" y="29" font-size="18" font-style="italic">A</text><path d="m18 32 9-9c-1-3 1-5 4-5" fill="none" stroke="#84c0fb" stroke-width="3"/>`,
  // dimension
  dim: `<path class="s" d="M1 0v64M63 0v64"/><path class="s" d="M8 13h48"/><path class="fg" d="m2 13 8-4v8zM62 13l-8-4v8z"/><path class="fy" d="M30 44l2-12 3 12zM18 46 15 38l11 8-3 3zM39 46l10-8-4 10-4 2zM8 56l13-3v5zM57 56l-13-3v5z"/>`,
  dimStyle: `<path class="s" d="M1 23v35M63 23v35M8 40h48"/><path class="fg" d="m2 40 8-4v8zM62 40l-8-4v8z"/><g transform="translate(0 -27)">${brush}</g>`,
  dimLinear: `<path class="s" d="M1 2v28M31 2v28"/>${dimH(11, 1, 31, "b", "fB")}`,
  dimCenter: `<circle class="s" cx="16" cy="16" r="14"/><path class="b" d="M16 11v10M11 16h10"/>`,
  dimOrd: `<path class="b" d="M0 13h10M16 13h12"/><path class="s" d="M13 0v24M6 31h14M31 6v14"/><path class="fg" d="M8 22h10l-5 8z"/><path class="fB" d="m30 13-8-5v10z"/>`,
  dimSpace: `${dimH(4, 0, 32)}${dimH(28, 0, 32)}<path class="fy" d="M12 7h8v18h-8z"/><path class="sd" d="M12 11h4M12 15h4M12 19h4"/>`,
  dimCont: `<path class="s" d="M2 2v28M16 2v28M30 2v28"/>${dimH(11, 2, 16, "b", "fB")}${dimH(11, 16, 30, "b", "fB")}`,
  tolerance: `<path class="s" d="M1 5h30v22H1zM17 5v22"/><circle class="w" cx="9" cy="16" r="4"/><path class="w" d="M9 9v14M3 16h12"/><text class="t fw" x="18" y="22" font-size="15" font-weight="700">.1</text>`,
  dimCheck: `<path class="s" d="M1 0v32M31 0v32"/>${dimH(7)}<path d="m10 22 5 5 8-8" fill="none" stroke="#85d68f" stroke-width="4"/>`,
  dimEdit: `<path class="s" d="M1 11 11 1M21 31l10-10M8 8l15 16"/><path class="fg" d="m6 6 3 8 5-5zM25 26l-8-3 5-5z"/><text class="t fB" x="18" y="13" font-size="16" font-weight="700">x</text>`,
  // leader
  mleader: leader(0, 3),
  mleaderStyle: `${leader(0, 3)}${brush}`,
  leaderAdd: `<path class="fn" d="M6 0h4v6h6v4h-6v6H6v-6H0V6h6z"/><circle class="s" cx="27" cy="16" r="4"/><path class="s" d="M23 16h-7l-7 11M16 16l8 12"/><path class="fg" d="M6 24v8l7-3zM26 24v8l-7-3z"/>`,
  leaderAlign: `${smallLeader(0, 0)}${smallLeader(4, 12)}<path class="b" d="M31 0v32"/>`,
  leaderBolt: `<circle class="s" cx="25" cy="8" r="6"/><path class="s" d="M19 8h-8L4 24"/><path class="fg" d="M0 20v10l8-4z"/><g class="hd">${lightning(16, 16)}</g>`,
  leaderDel: `<path d="m1 1 11 11M12 1 1 12" stroke="#ee6a66" stroke-width="4"/><circle class="s" cx="27" cy="14" r="4"/><path class="s" d="M23 14h-7L9 26M16 14l8 13"/><path class="fg" d="M6 23v8l7-3zM26 23v8l-7-3z"/>`,
  leaderCollect: `<circle class="s" cx="25" cy="8" r="6"/><circle class="s" cx="25" cy="21" r="6"/><path class="s" d="M19 8h-8L4 22"/><path class="fg" d="M0 19v9l8-4z"/>`,
  // table
  table: `<path class="s" d="M2 6h60v51H2zM2 22h60M2 34h60M2 45h60M22 22v35M42 22v35"/>`,
  tableStyle: `<path class="s" d="M30 51H1V1h54v32M1 17h54M1 28h54M1 39h42M19 17v34M37 17v28"/>${brush}`,
  linkTable: `${tableDoc}${sheetSet}<path class="fw hd" d="M14 17h18v15H14z"/><path class="fG" d="M14 17h18v3H14z"/><path class="sd" d="M18 24h3M23 24h6M18 28h3M23 28h6"/>`,
  downTable: `${tableDoc}${sheetSet}<path class="fB hd" d="M23 14h6v9h4l-7 9-7-9h4z"/>`,
  fieldTable: `${box}<text class="t fB" x="19" y="12" font-size="16" font-weight="700">A</text><path class="fb" d="M20 14h12v8H8v-4h12z"/><path class="fg" d="M8 24h24v8H8z"/>`,
  syncTable: `<path class="fg" d="M0 20h6v-5h22l4 5v12H0z"/><path d="M7 20h18M7 25h18M12 17v8M18 17v8" stroke="#9c9c9c" stroke-width="2"/>${sheetSet}<circle class="fd" cx="24" cy="8" r="8"/>${refresh(16, 0)}`,
  // parametric
  perp: `<path d="M3 1v54" stroke="#e27070" stroke-width="2"/><rect x="0" y="58" width="6" height="6" fill="#e27070"/><path class="s" d="M8 61h56"/>`,
  autoCon: `<path class="fb" d="M14 0h12v10H14z"/><path class="fg" d="M0 14h12v10H0z"/><path d="M13 0v24" stroke="#e27070" stroke-width="2"/>${lightning(16, 16)}`,
  showCon: bracket + bulb("#fcd787", 20, 14),
  mixCon: bracket + halfBulb(20, 14),
  hideCon: bracket + bulb("#8adbe6", 20, 14),
  dimLock: `<path class="s" d="M1 0v64M63 0v64M8 13h48"/><path class="fg" d="m2 13 8-4v8zM62 13l-8-4v8z"/><path class="fy" fill-rule="evenodd" d="M19 40h26v20H19zM31 46v8h2v-8z"/><path d="M24 41v-6c0-9 16-9 16 0v6" fill="none" stroke="#fcd787" stroke-width="4"/>`,
  dimConvert: `<path class="s" d="M1 0v32M31 0v32"/>${dimH(7)}${refresh(8, 14, "#84c0fb", "#ee6a66")}`,
  showDim: `<path class="s" d="M1 0v32M27 0v12"/>${dimH(7, 1, 27)}${bulb("#fcd787", 20, 14)}`,
  mixDim: `<path class="s" d="M1 0v32M27 0v12"/>${dimH(7, 1, 27)}${halfBulb(20, 14)}`,
  hideDim: `<path class="s" d="M1 0v32M27 0v12"/>${dimH(7, 1, 27)}${bulb("#8adbe6", 20, 14)}`,

  // canvas and command line
  caretOutline: `<path d="M2 9h28L16 26z" fill="#87959c" stroke="#20272e" stroke-width="2"/>`,
  detach: `<path class="s" d="M12 11H4v19h24V11h-8M10 11v19"/><path class="b" d="M17 22V4"/><path class="fB" d="M12 8h10l-5-8z"/>`,

  // right panel
  layersInfo: `${stack}<circle class="fg hd" cx="25" cy="24" r="8"/><path class="fd" d="M24 19h2v2h-2zM24 23h2v6h-2z"/>`,
  clipDoc: `<path class="fg" d="M1 14h11V7h13v7h7v16H1z"/><path class="fw" d="M27 7v6h5z"/><path class="cut" d="${clipPath}"/><path class="s" d="${clipPath}"/>`,
  calendar: `<path class="fg" d="M2 2h28v28H2z"/><path fill="#9c9c9c" d="M2 2h28v6H2z"/><path class="fd" d="M4 4h4v2H4zM6 11h5v5H6zM6 18h5v5H6z"/><path fill="#777" d="M13 11h5v5h-5zM21 11h5v5h-5zM13 18h5v5h-5zM21 18h5v5h-5zM6 26h20v2H6z"/>`,
  dock: `<path class="s" d="M10 12V3h18v26H10v-9M22 3v26"/><path class="b" d="M5 16h14"/><path class="fB" d="m1 16 7-4v8z"/>`,
  layMake: `${layer(6, "fb")}<circle class="fg hd" cx="16" cy="6" r="7"/>${layerEdge(12, "fg", 1)}${layerEdge(20, "fg", 1)}`,
  layMatch: `${layer(0)}${layerEdge(6)}${layerEdge(13)}<path class="fy hd" d="m15 24 5-3 8 9-4 4z"/><path class="fw" d="m22 20 4 1 3-3 2 2-2 4 3 2-4 5-8-8z"/>`,
  layPrev: `<path class="fB" d="M-1 9 10 1v5c6 0 10 3 9 8-3-3-5-3-9-2v5z"/><path class="fg" d="M22 8h8l-8 8H4l3-3h12z"/>${layerEdge(13, "fg", 3)}${layerEdge(21, "fg", 3)}`,
  layWalk: `${layer(0)}${layerEdge(7)}${layerEdge(14, "fb")}<path class="w" d="m28 21-8 8"/><path class="fw" d="M15 32v-9l8 9z"/>`,
  layIso: `${layer(0)}${layerEdge(7)}${layerEdge(14, "fb")}<path class="w" d="m17 31 10-9"/><path class="fw" d="M31 19v9l-9-9z"/>`,
  layFreeze: `${layer(2)}<g transform="translate(13 13) scale(.6)" class="cyan">${snowFlake}</g>`,
  layOff: `${layer(2)}<g transform="translate(19 12)"><circle class="cyanf" cx="6" cy="7" r="6"/><path class="fw" d="M3 14h6v3l-2 2H5l-2-2z"/></g>`,
  layLock: `${layer(2)}<g transform="translate(16 12) scale(.6)" class="cyan">${padlock}</g>`,
  layUnlock: `${layer(2)}<path class="fy" fill-rule="evenodd" d="M12 20h14v11H12zM18 23v5h2v-5z"/><path d="M21 20v-4c0-5 8-5 8 0v3" fill="none" stroke="#fcd787" stroke-width="2"/>`,
  lock: padlock,
  snow: snowFlake,
  chevron: `<path d="m3 9 13 13L29 9" fill="none" stroke="currentColor" stroke-width="4"/>`,
  eye: `<path class="fg" d="M0 16C9 4 23 4 32 16 23 28 9 28 0 16z"/><circle cx="16" cy="16" r="6" fill="none" stroke="#2f333f" stroke-width="3"/>`,
  contrast: `<path d="M3 3h26v26H3z" fill="none" stroke="#d9d9d9" stroke-width="3"/><path class="fg" d="M3 29 29 3v26z"/>`,
  sort: `<path class="fg" d="M16 0l10 13H6zM16 32l10-13H6z"/>`,
  weight: `<path class="s" d="M0 5h32"/><path d="M0 14h32" stroke="#d9d9d9" stroke-width="4"/><path d="M0 26h32" stroke="#d9d9d9" stroke-width="7"/>`,
  dashes: `<path d="M0 4h32" stroke="#d9d9d9" stroke-width="3" stroke-dasharray="3 3"/><path d="M0 16h32" stroke="#d9d9d9" stroke-width="3" stroke-dasharray="8 4"/><path d="M0 28h32" stroke="#d9d9d9" stroke-width="3"/>`,
  newLayer: `<path class="w" d="M13 4h15l-9 9H4z"/><g opacity=".7">${layerEdge(10, "fg", 2)}${layerEdge(18, "fg", 2)}</g>`,
  layerStates: `<path class="w" d="M11 2h13l-7 8H4z"/><g opacity=".6">${layerEdge(7)}${layerEdge(14)}</g><path class="w hdf" d="M14 18h17v13H14z"/><path class="w" d="M17 22h3M22 22h6M17 27h3M22 27h6"/>`,
  openBolt: `<path class="fg" d="M0 28V4h11l4 4h10v3H8z"/><path class="fg" d="M9 12h23l-7 16H2z"/><path class="fd" d="m20 13-8 8h4l-2 6 8-8h-4z"/>`,
  minus: `<path d="M8 16h20" stroke="#7f8794" stroke-width="5"/>`,
  columns: `<path class="s w3" d="M1 6h24v19H1zM9 6v19M17 6v19"/>`,
  search: `<circle cx="11" cy="13" r="10" fill="none" stroke="#222" stroke-width="2"/><path d="m17 21 7 8" stroke="#222" stroke-width="3"/><path d="m26 12 6 6 6-6" fill="none" stroke="#222" stroke-width="3"/>`,
  edit: `<path fill="#868c96" d="M1 1h21v5H1z"/><path d="M2 2v25h10M21 5v8M5 10h13M5 15h11M5 20h8" fill="none" stroke="#868c96" stroke-width="2"/><path fill="#868c96" d="m13 25 9-9 6 6-8 8h-7zM24 14l2-2 6 6-2 2z"/>`,
  checker: `<path d="M2 2h28v28H2z" fill="none" stroke="#d9d9d9" stroke-width="2"/><path class="fg" d="M5 5h4v4H5zM13 5h4v4h-4zM21 5h4v4h-4zM9 9h4v4H9zM17 9h4v4h-4zM5 13h4v4H5zM13 13h4v4h-4zM21 13h4v4h-4zM9 17h4v4H9zM17 17h4v4h-4zM5 21h4v4H5zM13 21h4v4h-4zM21 21h4v4h-4z"/>`,

  // status bar
  grid: `<path class="s" d="M8 1v30M16 1v30M24 1v30M1 8h30M1 16h30M1 24h30"/>`,
  snapDots: `<path d="M4 5h26M4 16h26M4 27h26" stroke="#d9d9d9" stroke-width="4" stroke-dasharray="4 7"/>`,
  ortho: `<path class="s" d="M3 2v27h28M3 19h10v10"/>`,
  polar: `<circle class="s" cx="14" cy="17" r="12"/><path class="s" d="M13 17h19M13 17 27 2"/><path class="fg" d="m15 19 8-10 3 8z"/>`,
  lineweight: `<path d="M0 4h16M0 15h16M0 27h16" stroke="#d9d9d9" stroke-width="6"/><path class="s" d="M16 3h16M16 12h16M16 23h16"/>`,
  selCycle: `<path class="w" d="M7 1H2v28h5M17 1h5v6"/><path d="M8 6h8v6H8z" fill="none" stroke="#85d68f" stroke-width="3"/><circle cx="12" cy="21" r="4" fill="none" stroke="#85d68f" stroke-width="3"/><path class="fw hd" d="m20 16 11 12h-5l2 6-4 1-3-6-3 2z"/>`,
  infer: `<path class="s" d="M0 28h32M1 28 24 4"/><path class="fg" d="M10 12h6v6h-6z"/>`,
  osnap: `<path class="w" d="M14 6h18v26H5V13"/><path class="w" d="M1 1h9v9H1z"/>`,
  annoVis: `<g class="white">${anno}</g><circle class="fw" cx="28" cy="7" r="7" stroke="#6a8fc0"/>`,
  annoAuto: `${anno}<g transform="translate(20 -1)">${lightning(0, 0)}</g>`,
  annoScale: anno,
  isolate: `<path class="s" d="M3 0h12v12H3z"/><circle class="s" cx="26" cy="13" r="6"/><path class="s" d="m15 20 7 11H8z"/>`,
};

const Icon = (props) =>
  h("svg", {
    class: "ic",
    width: props.size || 32,
    height: props.size || 32,
    viewBox: props.size === 64 ? "0 0 64 64" : "0 0 32 32",
    "aria-hidden": "true",
    innerHTML: icons[props.name === "transparency" ? "checker" : props.name],
  });
Icon.props = ["name", "size"];

const toolbar = [
  ["new", "open", "save", "saveAs"],
  ["undo", "redo"],
  ["print", "publish", "pageSetup", "plotStyle"],
  ["import", "export", "attach", "webPublish"],
  ["zoom", "pan", "orbit"],
  ["match", "quick", "count", "replace", "clean", "countNum"],
  ["compare", "share", "trace", "cloud"],
  ["clipBolt"],
];
const badged = ["cloud", "clipBolt"];

// "+" marks a large tool, ">" a flyout, "|" a jump to the fifth column
const tools = (list) =>
  list.split(" ").map((word) => ({
    icon: word.replace(/[+>|]/g, ""),
    big: word.includes("+"),
    fly: word.includes(">"),
    fifth: word.includes("|"),
  }));

const panels = [
  {
    title: "Draw",
    tall: true,
    tools: tools("line+ polyline+ circle+> rect+> arc> spline> xline> ray> ellipse> cloudRect> point> breakline"),
  },
  { title: "Hatch", tools: tools("hatch+ hatchEdit+> gradient+ boundary wipeout superhatch") },
  {
    title: "Block",
    tall: true,
    tools: tools(
      "insertBlock+ createBlock+ editBlock+ editAttr+> attrDef blockList blockSave blockBase attrSync attrManage blockReplace"
    ),
  },
  {
    title: "Modify",
    tall: true,
    tools: tools(
      "move+ copy rotate trim+> fillet> array> mirror stretch offset explode extend extract scale break> join order copyNest purge"
    ),
  },
  { title: "Text", tools: tools("mtext+ textStyle+ text spell textList pdfText textToM findText textUpd pdfSet") },
  {
    title: "Dimension",
    tools: tools("dim+ dimStyle+ dimLinear> dimCenter> dimOrd dimSpace dimCont> tolerance dimCheck dimEdit>"),
  },
  { title: "Leader", tools: tools("mleader+ mleaderStyle+ leaderAdd leaderAlign leaderBolt |leaderDel leaderCollect") },
  { title: "Table", tools: tools("table+ tableStyle+ linkTable downTable |fieldTable syncTable") },
  {
    title: "Parametric",
    tools: tools("perp+> autoCon showCon dimLock+> dimConvert showDim mixCon hideCon mixDim hideDim"),
  },
  { title: "New Panel" },
];

const frames = ["translate(0 0)", "translate(523 -147)"];

const history = [
  "Command: _qsave",
  "Command: UCS",
  "Current ucs name:  *WORLD*",
  "Specify origin of UCS or [Face/NAmed/OBject/Previous/View/World/X/Y/Z/ZAxis] <World>: x",
  "Specify rotation angle about X axis <90>: 90",
];

const layerTools = ["layMake", "layMatch", "layPrev", "layWalk", "layIso", "layFreeze", "layOff", "layLock", "layUnlock"];

const layers = [
  { name: "0", color: "#ffffff", picked: true },
  { name: "Armar...", color: "#ef6429", frozen: true },
  { name: "Caixil...", color: "#9a6ab0" },
  { name: "Defpo...", color: "#ffffff", frozen: true },
  { name: "Lages", color: "#f19837", frozen: true },
  { name: "Paredes", color: "#f19837", frozen: true },
  { name: "Portas", color: "#1531f5", frozen: true },
  { name: "Vidros", color: "#a8f84c", frozen: true },
];

const annotation = [
  ["Text style", "rd"],
  ["Dimension style", "rd"],
  ["Detail View style", "Imperial24"],
  ["Multileader style", "Standard"],
  ["Section View style", "Imperial24"],
  ["Table style", "Standard"],
  ["Annotation scale", "1:1"],
];

const statusTools = [
  "grid",
  "snapDots",
  "ortho",
  "polar",
  "lineweight",
  "transparency",
  "selCycle",
  "infer",
  "osnap",
  "annoVis",
  "annoAuto",
  "annoScale",
];
</script>

<style>
body {
  margin: 0;
  background: #20272e;
}

/* shapes inside the icons */
.ic {
  display: block;
  flex: none;
  overflow: visible;
}
.ic .s,
.ic .b,
.ic .w,
.ic .sd {
  fill: none;
  stroke-width: 2;
}
.ic .s { stroke: #d9d9d9; }
.ic .b { stroke: #84c0fb; }
.ic .w { stroke: #fff; }
.ic .sd { stroke: #6d7178; }
.ic .w3 { stroke-width: 3; }
.ic .w4 { stroke-width: 4; }
.ic .cut { fill: none; stroke: #3b4453; stroke-width: 6; }
.ic .o { stroke: #d9d9d9; stroke-width: 2; }
.ic .f,
.ic .fg { fill: #d9d9d9; }
.ic .fG { fill: #b9b9b9; }
.ic .fw { fill: #f6f6f6; }
.ic .fb { fill: #98c8f5; }
.ic .fB { fill: #84c0fb; }
.ic .fy { fill: #fcd787; }
.ic .ft { fill: #d5ae7a; }
.ic .fn { fill: #95d6a0; }
.ic .fr { fill: #ee6a66; }
.ic .fk { fill: #717684; }
.ic .fd { fill: #3b4453; }
.ic .hd { stroke: #3b4453; stroke-width: 3; paint-order: stroke; }
.ic .hdf { fill: #3b4453; }
.ic .blue .o { stroke: #84c0fb; fill: #56739a; }
.ic .blue .f { fill: #84c0fb; }
.ic .cyan { color: #8adbe6; }
.ic .cyanf { fill: #8adbe6; }
.ic .white .fg { fill: #fff; }
.ic .t { font-family: "Liberation Sans", sans-serif; }
.ic .sset { fill: #f0b183; stroke: #3b4453; stroke-width: 3; paint-order: stroke; }
</style>

<style scoped>
* {
  box-sizing: border-box;
}
button,
input,
select {
  font: inherit;
  color: inherit;
  border: 0;
  padding: 0;
  margin: 0;
  background: none;
  border-radius: 0;
  outline: 0;
}
button {
  display: flex;
  align-items: center;
  justify-content: center;
}
h2,
h3,
p {
  margin: 0;
  font-weight: 400;
}
.app {
  height: 100vh;
  display: flex;
  flex-direction: column;
  overflow: hidden;
  background: #3b4453;
  color: #f2f2f2;
  font-family: Inter, sans-serif;
  font-size: 22px;
}
.grow {
  flex: 1;
}
.caret {
  display: inline-block;
  border: 6px solid transparent;
  border-top: 9px solid #a9adb4;
  border-bottom: 0;
}

.menubar {
  flex: none;
  height: 74px;
  background: #000;
  display: flex;
  justify-content: flex-end;
  padding: 26px 27px;
}
.rec-dot {
  width: 12px;
  height: 12px;
  border-radius: 50%;
  background: #c87a1c;
}

.toolbar {
  flex: none;
  height: 82px;
  padding-top: 14px;
  display: flex;
  justify-content: center;
  gap: 62px;
  align-items: center;
  border-bottom: 2px solid #2b313d;
}
.tool-group {
  display: flex;
}
.tool {
  width: 66px;
  height: 48px;
  position: relative;
}
.badge {
  position: absolute;
  width: 20px;
  height: 20px;
  border-radius: 50%;
  border: 2px solid #fff;
  background: #e87840;
  top: 3px;
  right: 0;
}

.doc-tabs {
  flex: none;
  height: 46px;
  display: flex;
  padding-left: 2px;
  border-bottom: 2px solid #20272e;
}
.doc-tab {
  border-right: 2px solid #252b36;
  font-family: "Noto Sans", sans-serif;
  color: #9fa3aa;
}
.doc-tab.home {
  width: 47px;
}
.doc-tab.add {
  width: 47px;
}
.doc-tab.file {
  width: 259px;
  justify-content: flex-start;
  padding-left: 8px;
  padding-bottom: 4px;
}
.doc-tab.active {
  background: #4d586c;
  color: #fff;
  font-weight: 500;
}

.main {
  flex: 1;
  display: flex;
  min-height: 0;
}

/* tool palette */
.palette {
  flex: none;
  width: 368px;
  display: flex;
  flex-direction: column;
  font-family: "Liberation Sans", sans-serif;
}
.palette-tabs {
  display: flex;
  height: 46px;
  margin-bottom: -2px;
}
.palette-tab {
  width: 161px;
  background: #2f333f;
  border: solid #20272e;
  border-width: 0 2px 2px 0;
  font-size: 24px;
  color: #9c9fa6;
}
.palette-tab.active {
  background: none;
  color: #fff;
  border-bottom: 0;
}
.collapse {
  flex: 1;
  border-bottom: 2px solid #20272e;
}
.collapse .ic {
  width: 26px;
  height: 26px;
  opacity: 0.7;
}
.panel {
  margin: 0 8px;
  border-bottom: 2px solid #252b36;
}
.panel-head {
  height: 42px;
  padding-top: 2px;
  display: flex;
  align-items: center;
  font-size: 20px;
}
.panel-head h2 {
  flex: 1;
  padding-left: 9px;
  font-size: 20px;
}
.tri {
  border: 8px solid transparent;
  border-top: 9px solid #f2f2f2;
  border-bottom: 0;
  margin-top: 4px;
}
.panel-gear {
  width: 24px;
  margin-top: 2px;
}
.panel-gear .ic {
  width: 19px;
  height: 19px;
}
.panel-grid {
  display: grid;
  grid-template-columns: repeat(8, 1fr);
  grid-template-rows: 44px 44px;
  padding-bottom: 12px;
}
.panel-grid.tall {
  grid-template-rows: 44px 44px 52px;
  padding-bottom: 8px;
}
.cell {
  position: relative;
}
.cell.big {
  grid-column: span 2;
  grid-row: span 2;
}
.cell.fifth {
  grid-column-start: 5;
}
.cell.fly::after {
  content: "";
  position: absolute;
  right: 0;
  bottom: 1px;
  border: 4px solid #9b9c9e;
  border-top-color: transparent;
  border-left-color: transparent;
}
.cell.big.fly::after {
  right: 2px;
  bottom: 2px;
}
.cell .badge {
  top: 0;
  right: 0;
}
.palette-foot {
  margin-top: auto;
  height: 44px;
  display: flex;
  gap: 27px;
  padding-left: 26px;
}

/* drawing area */
.work {
  flex: 1;
  min-width: 0;
  display: flex;
  flex-direction: column;
}
.stage {
  flex: 1;
  min-height: 0;
  display: flex;
}
.canvas {
  flex: 1;
  min-width: 0;
  position: relative;
  overflow: hidden;
  background: #20272e;
}
.drawing {
  position: absolute;
  inset: 0;
  width: 100%;
  height: 100%;
}
.frame path {
  fill: none;
  stroke: #0000e0;
  stroke-width: 2;
}
.axis {
  fill: none;
  stroke: #e6e6e6;
  stroke-width: 2;
}
.axis-name {
  fill: #e6e6e6;
  font-size: 36px;
  font-weight: 200;
}
.view-labels {
  position: relative;
  display: flex;
  align-items: center;
  padding: 8px 0 0 26px;
  color: #9b9b9b;
  font: 600 22px/28px "Noto Sans", sans-serif;
}
.view-labels button + button {
  border-left: 2px solid #9b9b9b;
  padding: 0 14px 0 12px;
}
.view-labels .view-add {
  width: 41px;
  justify-content: flex-start;
  padding-left: 3px;
}
.navigator {
  position: absolute;
  top: 88px;
  right: 18px;
  display: flex;
  flex-direction: column;
  align-items: center;
  gap: 52px;
}
.ring {
  fill: #494e54;
}
.compass {
  fill: #b4b5b6;
  font: 700 24px "Liberation Sans", sans-serif;
  text-anchor: middle;
}
.compass text {
  dominant-baseline: central;
}
.compass .near {
  font-size: 36px;
}
.faces {
  fill: #474d54;
  font: 700 20px "Liberation Sans", sans-serif;
  text-anchor: middle;
}
.faces text {
  dominant-baseline: central;
}
.faces .back {
  font-size: 16px;
}
.edges {
  fill: none;
  stroke: #4b4f55;
  stroke-dasharray: 14 6;
}
.outline {
  fill: none;
  stroke: #55585c;
}
.ucs-name {
  height: 24px;
  padding: 0 9px;
  gap: 14px;
  border-radius: 8px;
  background: #656d75;
  color: #20272e;
  font: 22px/24px "Liberation Sans", sans-serif;
}
.ucs-name .ic {
  width: 18px;
  height: 18px;
}
.command {
  position: absolute;
  bottom: 0;
  left: 50%;
  width: 1000px;
  margin-left: -500px;
  color: #b9bcc1;
  font: 20px/30px "Noto Sans", sans-serif;
}
.history {
  position: relative;
  height: 151px;
  margin-left: 80px;
  padding: 0 10px;
  background: #3b4453;
  display: flex;
  flex-direction: column;
  justify-content: flex-end;
  white-space: pre;
  overflow: hidden;
}
.history .thumb {
  position: absolute;
  right: 11px;
  bottom: 4px;
  width: 8px;
  height: 40px;
  border-radius: 4px;
  background: #8f949c;
}
.prompt {
  height: 50px;
  display: flex;
  align-items: center;
  padding: 0 18px;
  gap: 23px;
  background: #3b4453;
}
.prompt label {
  padding-bottom: 8px;
}
.prompt label .caret {
  margin-left: 2px;
}
.prompt input {
  flex: 1;
}
.prompt .ic {
  width: 30px;
  height: 30px;
}

/* right panel */
.inspector {
  flex: none;
  width: 546px;
  display: flex;
  flex-direction: column;
  overflow: hidden;
  background: #3b4453;
}
.side-tabs {
  flex: none;
  display: flex;
  height: 46px;
}
.side-tab,
.side-fill {
  width: 105px;
  background: #2f333f;
  border: solid #20272e;
  border-width: 0 2px 2px 0;
}
.side-tab.active {
  background: none;
  border-bottom: 0;
}
.side-fill {
  flex: 1;
}
.side-more {
  width: 48px;
  border: solid #20272e;
  border-width: 2px 0 2px;
}
.side-more .ic {
  opacity: 0.7;
}
.side-title {
  display: flex;
  align-items: center;
  height: 30px;
  padding: 0 23px 0 20px;
  gap: 14px;
}
.side-title h2 {
  flex: 1;
  font-size: 23px;
}
.side-title .ic {
  width: 28px;
  height: 30px;
}
.layer-tools {
  display: flex;
  gap: 16px;
  padding: 35px 0 0 66px;
}
.select {
  position: relative;
  display: flex;
  align-items: center;
  height: 38px;
  border: 2px solid #2d3c3c;
  border-radius: 4px;
  background: #4f596c;
  color: #fff;
}
.select::after {
  content: "";
  position: absolute;
  right: 7px;
  border: 6px solid transparent;
  border-top: 9px solid #e0e0e0;
  border-bottom: 0;
  pointer-events: none;
}
.select select {
  appearance: none;
  flex: 1;
  min-width: 0;
  height: 100%;
  padding-left: 12px;
  opacity: 1;
}
.dot {
  width: 16px;
  height: 16px;
  border-radius: 50%;
  background: #d9d9d9;
}
.swatch {
  flex: none;
  width: 18px;
  height: 18px;
  border: 2px solid #000;
  background: #fff;
}
.current {
  height: 54px;
  margin: 20px 15px 0 19px;
}
.state {
  display: flex;
  align-items: center;
  gap: 16px;
  padding: 0 12px 0 19px;
}
.state .ic {
  width: 18px;
  height: 20px;
  color: #6b7485;
}
.layer-state {
  height: 54px;
  margin: 2px 17px 0 20px;
}
.toggle-list {
  height: 53px;
  padding-left: 28px;
  gap: 24px;
  color: #c6c9ce;
}
.toggle-list .ic {
  width: 17px;
  height: 17px;
}
.table-box {
  margin: 0 20px;
  height: 418px;
  border: 2px solid #353e4c;
}
.table-scroll {
  height: 385px;
  background: #4f596c;
  border: solid #2b303b;
  border-width: 2px 0;
  overflow: hidden;
}
table {
  width: 100%;
  table-layout: fixed;
  border-collapse: collapse;
}
.c-eye {
  width: 63px;
}
.c-name {
  width: 116px;
}
.c-flag {
  width: 44px;
}
.c-weight {
  width: 162px;
}
th {
  height: 47px;
  padding: 0;
  background: #2f333f;
  border-left: 2px solid #2b303b;
  border-bottom: 2px solid #2b303b;
  color: #d9d9d9;
}
th .ic {
  width: 19px;
  height: 20px;
  margin: auto;
}
th:first-child .ic {
  width: 24px;
  height: 24px;
}
th.sorted {
  background: #4f596c;
}
th.sorted div {
  position: relative;
  display: flex;
  align-items: center;
  padding: 0 8px;
  gap: 14px;
}
th.sorted .ic {
  width: 17px;
  height: 18px;
  margin: 0;
}
th.sorted div::after {
  content: "";
  position: absolute;
  left: 50px;
  bottom: -9px;
  border: 6px solid transparent;
  border-bottom: 10px solid #4a90e8;
  border-top: 0;
}
th.last .ic {
  margin-right: 16px;
}
td {
  height: 38px;
  padding: 0;
  color: #fff;
}
.picked td {
  background: #919dae;
}
td .dot {
  display: block;
  margin-left: 29px;
}
.layer-name {
  display: flex;
  align-items: center;
  gap: 19px;
  white-space: nowrap;
}
.mid .ic {
  width: 18px;
  height: 18px;
  margin: auto;
  color: #d9d9d9;
}
.weight {
  padding-left: 15px;
}
.ltype i {
  display: block;
  height: 2px;
  margin-left: 15px;
  background: #fff;
}
.table-box .thumb {
  display: block;
  width: 427px;
  height: 10px;
  margin: 13px 0 0 4px;
  border-radius: 5px;
  background: #868d99;
}
.list-tools {
  display: flex;
  align-items: center;
  height: 51px;
  padding: 0 30px 0 36px;
  gap: 32px;
}
.list-tools .ic {
  width: 28px;
  height: 28px;
}
.list-tools button:last-child::after {
  content: "";
  border: 5px solid transparent;
  border-top: 7px solid #d9d9d9;
  border-bottom: 0;
}
.search {
  display: flex;
  align-items: center;
  height: 41px;
  margin: 0 22px;
  padding-left: 9px;
  gap: 17px;
  border-radius: 8px;
  background: #fff;
  color: #222;
  font-size: 25px;
}
.search .ic {
  width: 28px;
  height: 28px;
}
.search input {
  flex: 1;
}
.search input::placeholder {
  color: #bcbcbc;
  opacity: 1;
}

/* properties */
.props {
  flex: 1;
  min-height: 0;
  display: flex;
  flex-direction: column;
  margin-top: 16px;
  border-top: 2px solid #20272e;
  padding-bottom: 16px;
}
.props .side-title {
  height: 32px;
}
.switch {
  display: flex;
  border: 2px solid #2b303b;
  font-size: 17px;
  margin-right: 4px;
}
.switch button {
  width: 58px;
  height: 24px;
  color: #7f8692;
}
.switch .on {
  background: #4f596c;
  color: #fff;
  border-right: 2px solid #2b303b;
}
.space {
  flex: none;
  height: 42px;
  margin: 17px 20px 0;
  background: #434c5d;
  border-color: #37434c;
  color: #7f8794;
}
.space::after {
  border-top-color: #7f8794;
}
.prop-scroll {
  position: relative;
  flex: 1;
  min-height: 0;
  overflow: hidden;
  margin-top: 8px;
}
.prop-scroll .thumb {
  position: absolute;
  right: 20px;
  top: 5px;
  width: 10px;
  height: 240px;
  border-radius: 5px;
  background: #868d99;
}
h3 {
  display: flex;
  align-items: center;
  height: 62px;
  padding-left: 27px;
  gap: 22px;
  font-size: 22px;
  font-weight: 700;
  color: #d5d7da;
}
h3 .ic {
  width: 17px;
  height: 17px;
  color: #20272e;
}
.row {
  display: flex;
  align-items: center;
  height: 46px;
  margin: 0 38px 0 20px;
  padding-right: 7px;
}
.row.focus {
  outline: 2px solid #454a54;
  outline-offset: -2px;
}
.row label {
  flex: 1;
  padding-right: 19px;
  text-align: right;
  color: #d0d3d7;
}
.row > .select,
.row > .field,
.pair {
  width: 205px;
}
.row .swatch {
  margin: 0 9px 0 18px;
}
.sample {
  width: 65px;
  height: 2px;
  margin: 0 16px 0 14px;
  background: #fff;
}
.pair {
  display: flex;
  align-items: center;
  gap: 6px;
}
.field {
  height: 38px;
  padding: 2px 6px 0;
  border: 2px solid #2d3c3c;
  border-radius: 4px;
  background: #4f596c;
  color: #fff;
}
.amount {
  width: 114px;
  height: 34px;
  margin-left: 6px;
  padding-right: 4px;
  border-radius: 0;
  text-align: right;
  background:
    linear-gradient(#9aa1ad, #9aa1ad) 52px 100% / 1px 12px no-repeat,
    linear-gradient(#5b95ee, #5b95ee) 0 0 / 3px 6px no-repeat,
    linear-gradient(#5b95ee, #5b95ee) 0 100% / 3px 6px no-repeat,
    #4f596c;
}
.mini {
  flex: 1;
  justify-content: flex-start;
  padding-left: 12px;
}
.mini .ic {
  width: 28px;
  height: 28px;
}
.height {
  width: 160px;
}
.measure {
  flex: 1;
  height: 38px;
  border: 2px solid #2d3c3c;
  border-radius: 4px;
}

/* status bar */
.status {
  flex: none;
  height: 48px;
  display: flex;
  border: 2px solid #20272e;
  border-right: 0;
  padding-right: 8px;
  background: #3b4453;
}
.sheet {
  width: 116px;
  padding-bottom: 3px;
  border-right: 2px solid #20272e;
  color: #9fa3aa;
  font-family: "Noto Sans", sans-serif;
}
.sheet.active {
  width: 120px;
  background: #4d586c;
  color: #fff;
  font-weight: 600;
}
.sheet.plus {
  width: 46px;
  padding: 0;
}
.coords {
  display: flex;
  align-items: center;
  border-left: 2px solid #20272e;
  padding: 0 8px 0 27px;
  color: #c1c4c9;
}
.mode {
  width: 40px;
  height: 40px;
  margin: 2px;
}
.mode.on {
  background: #6a8fc0;
}
.scale {
  gap: 8px;
  margin-right: 12px;
  color: #a9adb4;
}
</style>
